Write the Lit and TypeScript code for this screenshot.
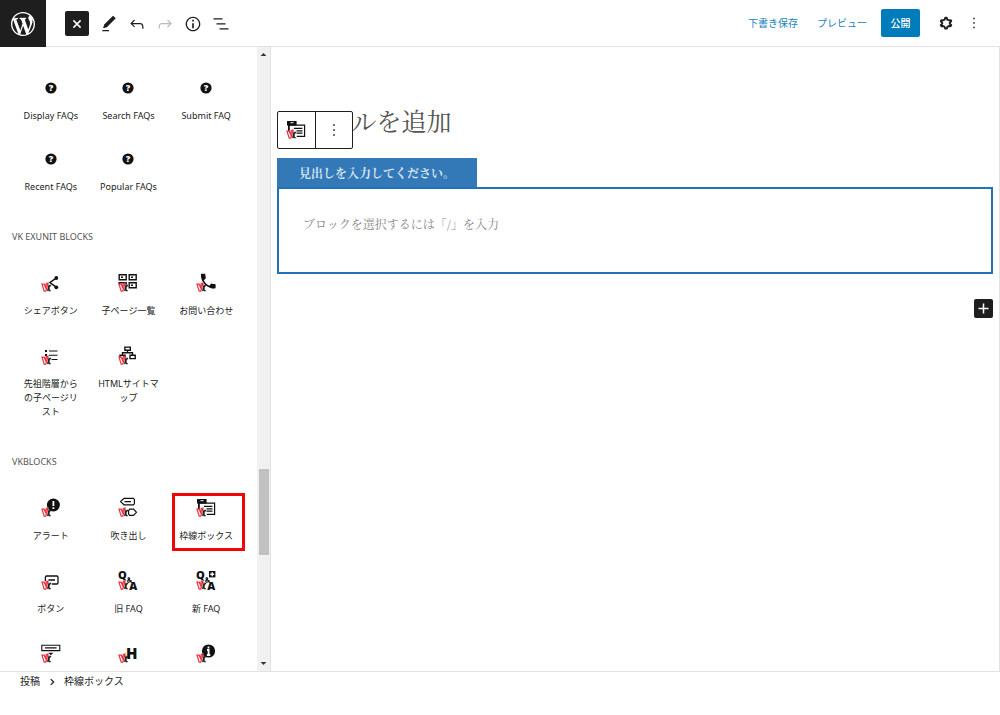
import { LitElement, html, svg, css, SVGTemplateResult } from "lit";
import { customElement, property } from "lit/decorators.js";

const vkMark = svg`
  <path d="M1 11.2h2.2l1.3 3 .8-3.6 1.7-.5-2.2 8H3.2z" fill="#fff" stroke="#ee2f3c" stroke-width="1.2"/>
  <path d="M8.1 11.6 6.6 18M9.9 11.8 8 14.4l.2 3.2h1.5" fill="none" stroke="#222" stroke-width="1.2"/>`;

const ampersand = svg`<path d="M14 11.6 10 7.8q.2-1.6 1.5-.8.7 1-1 2-1.6 1.2-.2 2.2 1.8.4 3-2.2" fill="none" stroke="#111" stroke-width="1.1"/>`;

const toolIcons: Record<string, SVGTemplateResult> = {
  close: svg`<path d="M7.2 7.2l9.6 9.6M16.8 7.2l-9.6 9.6" stroke="currentColor" stroke-width="2"/>`,
  edit: svg`<path d="M20.1 5.1L16.9 2 6.2 12.7l-1.3 4.4 4.5-1.3L20.1 5.1zM4 20.8h8v-1.5H4v1.5z"/>`,
  undo: svg`<path d="M18.3 11.7c-.6-.6-1.4-.9-2.3-.9H6.7l2.9-3.3-1.1-1-4.5 5L8.5 16l1-1-2.7-2.7H16c.5 0 .9.2 1.3.5 1 1 1 3.4 1 4.5v.3h1.5v-.2c0-1.5 0-4.3-1.5-5.7z"/>`,
  redo: svg`<path d="M15.6 6.5l-1.1 1 2.9 3.3H8c-.9 0-1.7.3-2.3.9-1.4 1.5-1.4 4.2-1.4 5.6v.2h1.5v-.3c0-1.1 0-3.5 1-4.5.3-.3.7-.5 1.3-.5h9.2L14.5 15l1.1 1.1 4.6-4.6-4.6-5z"/>`,
  info: svg`<path d="M12 3.2c-4.8 0-8.8 3.9-8.8 8.8 0 4.8 3.9 8.8 8.8 8.8 4.8 0 8.8-3.9 8.8-8.8 0-4.8-4-8.8-8.8-8.8zm0 16c-4 0-7.2-3.3-7.2-7.2C4.8 8 8 4.8 12 4.8s7.2 3.3 7.2 7.2c0 4-3.2 7.2-7.2 7.2zM11 17h2v-6h-2v6zm0-8h2V7h-2v2z"/>`,
  list: svg`<path d="M13.8 5.2H3v1.5h10.8V5.2zm-3.6 12v1.5H21v-1.5H10.2zm7.2-6H6.6v1.5h10.8v-1.5z"/>`,
  gear: svg`<g transform="translate(12 12)"><path fill="none" stroke="currentColor" stroke-width="2.6" stroke-linejoin="round" d="M-1-7h2L1.8-4.4 4.4-3.4 6.4-3.8 7-2.4 5-.2V.8L7 3 6 4.4 3.9 4 1.9 5.2 1 7.4H-1L-1.9 5.2-3.9 4-6 4.4-7 3-5 .8V-.2L-7-2.4-6.2-3.8-4.4-3.4-1.8-4.4z"/></g>`,
  more: svg`<path d="M13 19h-2v-2h2v2zm0-6h-2v-2h2v2zm0-6h-2V5h2v2z"/>`,
  plus: svg`<path d="M12 4v16M4 12h16" stroke="currentColor" stroke-width="2.4"/>`,
  chevron: svg`<path d="M9 5l7 7-7 7" fill="none" stroke="currentColor" stroke-width="3"/>`,
  up: svg`<path d="M2 17l10-10 10 10z"/>`,
  down: svg`<path d="M2 7l10 10L22 7z"/>`,
};

const blockIcons: Record<string, SVGTemplateResult> = {
  faq: svg`<circle cx="10" cy="10" r="5.6"/><text x="10" y="13.4" text-anchor="middle" class="glyph" font-size="9" fill="#fff">?</text>`,
  share: svg`<path d="M15.5 4.8 9 9.5l6.5 4.8" fill="none" stroke="#111" stroke-width="1.5"/><circle cx="15.3" cy="5" r="1.9"/><circle cx="15.3" cy="14.3" r="1.9"/>${vkMark}`,
  grid: svg`<g fill="none" stroke="#111" stroke-width="1.4"><path d="M1.2 1.7h7v5h-7zM11.2 1.7h7v5h-7zM11.2 9.7h7v5h-7zM1.2 11.5V9.7h7v2"/></g><path d="M3 3.4h2v1.6H3zM13 3.4h2v1.6h-2zM13 11.4h2V13h-2z"/>${vkMark}`,
  phone: svg`<path transform="translate(2.4 -1.6) scale(.82)" d="M6.62 10.79c1.44 2.83 3.76 5.14 6.59 6.59l2.2-2.2c.27-.27.67-.36 1.02-.24 1.12.37 2.33.57 3.57.57.55 0 1 .45 1 1V20c0 .55-.45 1-1 1-9.39 0-17-7.61-17-17 0-.55.45-1 1-1h3.5c.55 0 1 .45 1 1 0 1.25.2 2.45.57 3.57.11.35.03.74-.25 1.02l-2.2 2.2z"/>${vkMark}`,
  list: svg`<path d="M4 4h2v2H4zM4 8h2v2H4zM8 4.5h8.5v1H8zM8 8.8h8.5v1H8zM10.5 13h6v1h-6z"/>${vkMark}`,
  sitemap: svg`<path d="M6.9 1.1h5.4v3.2H6.9zM12 9.2h5.2v3.4H12zM2 11V9.2h5.2v2M9.5 4.5v2M4.5 9V6.7h10V9" fill="none" stroke="#111" stroke-width="1.4"/>${vkMark}`,
  alert: svg`<circle cx="12.4" cy="7" r="6.5"/><path d="M12.4 3v5M12.4 9.2v1.8" stroke="#fff" stroke-width="1.8"/>${vkMark}`,
  balloon: svg`<path d="M6 .4h9.4l1 1v4.4l-1 1H6L2.6 3.6zM6.5 3.6h6.5M11.6 11.2h4l2.8 3.1-2.8 3.1h-4l-1-1.4v-3.4z" fill="none" stroke="#111" stroke-width="1.2"/>${vkMark}`,
  frame: svg`<path d="M1 1h9.6v4.4H3.5V11H2V5.4H1z"/><path d="M4.5 2.2h3v1h-3z" fill="#fff"/><path d="M3 10.5V5.2h15.6v11.2H10.8M8 8.3h8.4M10.5 10.8h6M10.5 13.2h6" fill="none" stroke="#111" stroke-width="1.2"/>${vkMark}`,
  button: svg`<path d="M4.4 10V6.2q0-1.2 1.2-1.2h10.2q1.2 0 1.2 1.2v5.6q0 1.2-1.2 1.2h-5M7.5 9h6.5" fill="none" stroke="#111" stroke-width="1.3"/>${vkMark}`,
  qa: svg`<text x="0" y="8" class="glyph" font-size="11">Q</text>${ampersand}<text x="11.2" y="19" class="glyph" font-size="11">A</text>${vkMark}`,
  qaNew: svg`<text x="0" y="8" class="glyph" font-size="11">Q</text>${ampersand}<text x="11.2" y="19" class="glyph" font-size="11">A</text><path d="M13 0h6.4v6.4H13z"/><path d="M16.2 1.2v4M14.2 3.2h4" stroke="#fff" stroke-width="1.4"/>${vkMark}`,
  accordion: svg`<path d="M.8 1.2h18v5.4H.8zM4 3.9h11.6" fill="none" stroke="#111" stroke-width="1.1"/><path d="M7.4 8.8h5l-2.5 2.4z"/>${vkMark}`,
  heading: svg`<text x="8" y="15" class="glyph" font-size="15">H</text>${vkMark}`,
  infoBall: svg`<circle cx="12.5" cy="7" r="6.6"/><path d="M12.5 2.6v1.9M11 6h1.6v5M10.9 11h3.4" fill="none" stroke="#fff" stroke-width="1.8"/>${vkMark}`,
};

@customElement("ui-icon")
class UiIcon extends LitElement {
  @property() name = "";
  static styles = css`
    :host { display: inline-flex; width: 20px; height: 20px; flex: none; }
    svg { width: 100%; height: 100%; fill: currentColor; }
  `;
  render() {
    return html`<svg viewBox="0 0 24 24" aria-hidden="true">${toolIcons[this.name]}</svg>`;
  }
}

@customElement("block-icon")
class BlockIcon extends LitElement {
  @property() name = "";
  static styles = css`
    :host { display: block; width: 20px; height: 20px; flex: none; }
    svg { display: block; width: 100%; height: 100%; fill: #111; overflow: visible; }
    .glyph { font-family: "Open Sans", "Liberation Sans", sans-serif; font-weight: 800; }
  `;
  render() {
    return html`<svg viewBox="0 0 20 20" aria-hidden="true">${blockIcons[this.name]}</svg>`;
  }
}

interface Block { icon: string; label: string; marked?: boolean; iconOnly?: boolean; }
interface Group { title: string; blocks: Block[]; }

const groups: Group[] = [
  { title: "", blocks: [
    { icon: "faq", label: "Display FAQs" },
    { icon: "faq", label: "Search FAQs" },
    { icon: "faq", label: "Submit FAQ" },
    { icon: "faq", label: "Recent FAQs" },
    { icon: "faq", label: "Popular FAQs" },
  ] },
  { title: "VK EXUNIT BLOCKS", blocks: [
    { icon: "share", label: "シェアボタン" },
    { icon: "grid", label: "子ページ一覧" },
    { icon: "phone", label: "お問い合わせ" },
    { icon: "list", label: "先祖階層からの子ページリスト" },
    { icon: "sitemap", label: "HTMLサイトマップ" },
  ] },
  { title: "VKBLOCKS", blocks: [
    { icon: "alert", label: "アラート" },
    { icon: "balloon", label: "吹き出し" },
    { icon: "frame", label: "枠線ボックス", marked: true },
    { icon: "button", label: "ボタン" },
    { icon: "qa", label: "旧 FAQ" },
    { icon: "qaNew", label: "新 FAQ" },
    { icon: "accordion", label: "アコーディオン", iconOnly: true },
    { icon: "heading", label: "見出し", iconOnly: true },
    { icon: "infoBall", label: "アイコン", iconOnly: true },
  ] },
];

@customElement("block-inserter")
class BlockInserter extends LitElement {
  static styles = css`
    :host { display: flex; width: 270px; flex: none; min-height: 0; }
    .list { flex: 1; min-width: 0; overflow: hidden; padding: 21px 12px 0; }
    .title { margin: 0; padding: 20px 0 19px; font-size: 9px; line-height: 14px; font-weight: 400; color: #555; }
    .grid { display: grid; grid-template-columns: repeat(3, 1fr); }
    .grid.wide { row-gap: 2px; }
    .item { position: relative; display: flex; flex-direction: column; align-items: center; gap: 11px;
      padding: 10px 8px 16px; border: 0; background: none; color: #222; font: inherit; font-size: 9px; line-height: 14px; }
    .item span { word-break: break-all; }
    .marked::after { content: ""; position: absolute; inset: 5px 0 8px 5px; border: 3px solid #f20505; }
    .bar { width: 13px; display: flex; flex-direction: column; align-items: center; background: #f1f1f1; }
    .arrow { display: flex; align-items: center; justify-content: center; width: 100%; height: 15px; padding: 0; border: 0; background: none; color: #333; }
    .arrow ui-icon { width: 7px; height: 7px; }
    .track { flex: 1; width: 10px; display: grid; grid-template-rows: 407fr 86fr 101fr; }
    .thumb { grid-row: 2; background: #c1c1c1; }
  `;
  render() {
    return html`
      <div class="list">
        ${groups.map((g) => html`
          ${g.title ? html`<h2 class="title">${g.title}</h2>` : ""}
          <div class="grid ${g.title ? "wide" : ""}">
            ${g.blocks.map((b) => html`
              <button class="item ${b.marked ? "marked" : ""}" aria-label=${b.label}>
                <block-icon name=${b.icon}></block-icon>${b.iconOnly ? "" : html`<span>${b.label}</span>`}
              </button>`)}
          </div>`)}
      </div>
      <div class="bar">
        <button class="arrow" aria-label="上へ"><ui-icon name="up"></ui-icon></button>
        <div class="track"><div class="thumb"></div></div>
        <button class="arrow" aria-label="下へ"><ui-icon name="down"></ui-icon></button>
      </div>`;
  }
}

@customElement("app-root")
class AppRoot extends LitElement {
  static styles = css`
    :host { display: flex; flex-direction: column; height: 100vh; background: #fff; color: #1e1e1e;
      font-family: "Noto Sans", "Noto Sans CJK JP", sans-serif; font-size: 10px; line-height: 20px; }
    * { box-sizing: border-box; }
    button { font: inherit; color: inherit; border: 0; background: none; padding: 0; display: flex; align-items: center; justify-content: center; }
    header { display: flex; align-items: stretch; justify-content: space-between; height: 47px; flex: none; background: linear-gradient(#e2e2e2, #e2e2e2) bottom / 100% 1px no-repeat; }
    .side { display: flex; align-items: center; }
    .logo { display: flex; align-items: center; justify-content: center; width: 46px; height: 47px; background: #1e1e1e; color: #fff; margin-right: 19px; }
    .logo svg { width: 24px; height: 24px; fill: currentColor; }
    .tools { display: flex; align-items: center; gap: 8px; }
    .tool { width: 20px; height: 24px; }
    .toggle { width: 24px; height: 25px; border-radius: 2px; background: #1e1e1e; color: #fff; margin-right: 2px; }
    .toggle ui-icon { width: 18px; height: 18px; }
    .off { color: #bbb; }
    .actions { gap: 19px; padding: 0 16px 1px 0; }
    .link { color: #1a84bf; }
    .publish { width: 39px; height: 28px; border-radius: 2px; background: #007cba; color: #fff; margin: 0 -3px 0 -5px; font-weight: 500; }
    .menu { display: flex; gap: 8px; }
    .menu ui-icon { width: 18px; height: 18px; }
    main { display: flex; flex: 1; min-height: 0; }
    .editor { flex: 1; min-width: 0; padding: 60px 6px 0; border: solid #e2e2e2; border-width: 0 1px; font-family: "Noto Serif CJK JP", "Noto Serif JP", "Liberation Serif", "Noto Sans CJK JP", serif; }
    .heading { position: relative; }
    h1 { margin: 0; font-size: 25px; line-height: 26px; font-weight: 400; color: #555; }
    .floating { position: absolute; left: 0; top: 4px; display: flex; width: 76px; height: 38px; border: 1px solid #1e1e1e; border-radius: 2px; background: #fff; }
    .floating button { flex: 1; }
    .floating button + button { border-left: 1px solid #1e1e1e; }
    .block { margin-top: 25px; }
    .tab { width: fit-content; padding: 0 22px; background: #3379b7; color: #d6e4f1; font-size: 12px; line-height: 29px; font-weight: 700; }
    .box { min-height: 87px; padding: 25px 24px; border: 2px solid #2271b9; color: #8a8a8a; font-size: 12px; line-height: 20px; font-weight: 400; }
    .box p { margin: 0; }
    .add { width: 19px; height: 19px; margin: 25px 0 0 auto; border-radius: 2px; background: #1e1e1e; color: #fff; }
    .add ui-icon { width: 15px; height: 15px; }
    footer { flex: none; display: flex; align-items: center; gap: 7px; padding: 0 20px 24px; border-top: 1px solid #e2e2e2; line-height: 19px; }
    footer ui-icon { width: 10px; height: 10px; }
  `;
  render() {
    return html`
      <header>
        <div class="side">
          <a class="logo" href="#" aria-label="WordPress"><svg viewBox="0 0 20 20"><path d="M20 10c0-5.51-4.49-10-10-10C4.48 0 0 4.49 0 10c0 5.52 4.48 10 10 10 5.51 0 10-4.48 10-10zM7.78 15.37L4.37 6.22c.55-.02 1.17-.08 1.17-.08.5-.06.44-1.13-.06-1.11 0 0-1.45.11-2.37.11-.18 0-.37 0-.58-.01C4.12 2.69 6.87 1.11 10 1.11c2.33 0 4.45.87 6.05 2.34-.68-.11-1.65.39-1.65 1.58 0 .74.45 1.36.9 2.1.35.61.55 1.36.55 2.46 0 1.49-1.4 5-1.4 5l-3.03-8.37c.54-.02.82-.17.82-.17.5-.05.44-1.25-.06-1.22 0 0-1.44.12-2.38.12-.87 0-2.33-.12-2.33-.12-.5-.03-.56 1.2-.06 1.22l.92.08 1.26 3.41zM17.41 10c.24-.64.74-1.87.43-4.25.7 1.29 1.05 2.71 1.05 4.25 0 3.29-1.73 6.24-4.4 7.78.97-2.59 1.94-5.2 2.92-7.78zM6.1 18.09C3.12 16.65 1.11 13.53 1.11 10c0-1.3.23-2.48.72-3.59C3.25 10.3 4.67 14.2 6.1 18.09zm4.03-6.63l2.58 6.98c-.86.29-1.76.45-2.71.45-.79 0-1.57-.11-2.29-.33.81-2.38 1.62-4.74 2.42-7.1z"/></svg></a>
          <div class="tools">
            <button class="toggle" aria-label="閉じる"><ui-icon name="close"></ui-icon></button>
            <button class="tool" aria-label="編集"><ui-icon name="edit"></ui-icon></button>
            <button class="tool" aria-label="元に戻す"><ui-icon name="undo"></ui-icon></button>
            <button class="tool off" aria-label="やり直す"><ui-icon name="redo"></ui-icon></button>
            <button class="tool" aria-label="詳細"><ui-icon name="info"></ui-icon></button>
            <button class="tool" aria-label="リスト表示"><ui-icon name="list"></ui-icon></button>
          </div>
        </div>
        <div class="side actions">
          <button class="link">下書き保存</button>
          <button class="link">プレビュー</button>
          <button class="publish">公開</button>
          <div class="menu">
            <button class="tool" aria-label="設定"><ui-icon name="gear"></ui-icon></button>
            <button class="tool" aria-label="オプション"><ui-icon name="more"></ui-icon></button>
          </div>
        </div>
      </header>
      <main>
        <block-inserter></block-inserter>
        <section class="editor">
          <div class="heading">
            <h1>タイトルを追加</h1>
            <div class="floating">
              <button aria-label="枠線ボックス"><block-icon name="frame"></block-icon></button>
              <button aria-label="オプション"><ui-icon name="more"></ui-icon></button>
            </div>
          </div>
          <div class="block">
            <div class="tab">見出しを入力してください。</div>
            <div class="box"><p>ブロックを選択するには「/」を入力</p></div>
          </div>
          <button class="add" aria-label="ブロックを追加"><ui-icon name="plus"></ui-icon></button>
        </section>
      </main>
      <footer><span>投稿</span><ui-icon name="chevron"></ui-icon><span>枠線ボックス</span></footer>`;
  }
}
